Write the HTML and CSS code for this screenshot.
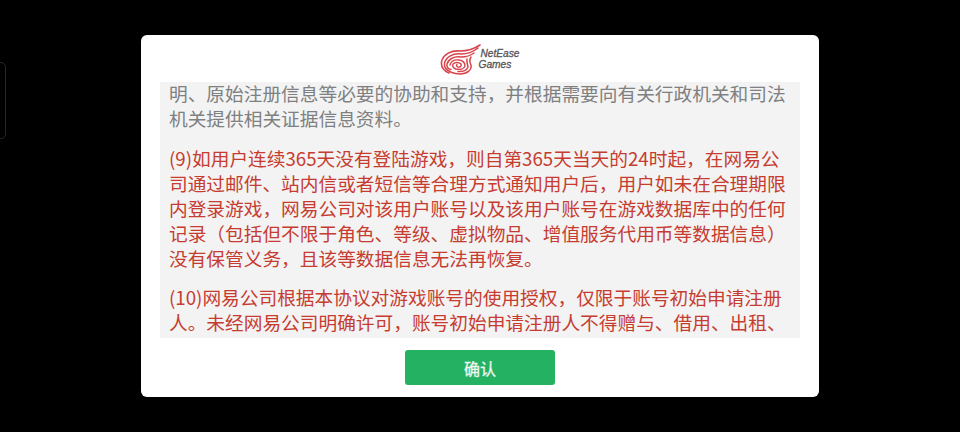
FILE: index.html
```html
<!DOCTYPE html>
<html lang="zh-CN">
<head>
<meta charset="utf-8">
<title>NetEase Games</title>
<link rel="stylesheet" href="styles.css">
</head>
<body>
<div class="edge"></div>
<main class="dialog">
  <header class="logo">
    <svg class="mark" viewBox="0 0 41 31" width="41" height="31" fill="none" stroke="#d9434b" stroke-linecap="round">
      <path d="M40 1C34 5 27 7 20 7 12 6 3 10 1.500 18 1 23 4 27 9 29" stroke-width="1.6"/>
      <path d="M38 4C33 8 27 10 21 10 13 9 6 13 4.500 19 4 23 6 26 10 27.500" stroke-width="1.5"/>
      <path d="M34 9C30 12 26 13 21 13 14 12 8.500 15 7 20 6.500 23 8 25 11 25.500" stroke-width="1.5"/>
      <path d="M31 13C29 16 30 19 31 21 32 26 27 30 20 30 16 30 13 29 10.500 28" stroke-width="1.5"/>
      <path d="M27 15C26 18 28 21 28 23 27 26 23 28 18 27.500" stroke-width="1.5"/>
      <path d="M10 21C11 17 15 15.500 19 16 23 16.500 25 19 25 22 24 25 20 26 16 25 13 24 12 22 13 20 15 18 19 18 21 20 22 22 20 23.500 18 23 16.500 22.500 16 21.500 17 20.500" stroke-width="1.4"/>
    </svg>
    <div class="brand"><span class="brand-top">NetEase</span><span>Games</span></div>
  </header>
  <section class="terms">
    <div class="flow">
      <p class="muted">明、原始注册信息等必要的协助和支持，并根据需要向有关行政机关和司法机关提供相关证据信息资料。</p>
      <p class="alert">(9)如用户连续365天没有登陆游戏，则自第365天当天的24时起，在网易公司通过邮件、站内信或者短信等合理方式通知用户后，用户如未在合理期限内登录游戏，网易公司对该用户账号以及该用户账号在游戏数据库中的任何记录（包括但不限于角色、等级、虚拟物品、增值服务代用币等数据信息）没有保管义务，且该等数据信息无法再恢复。</p>
      <p class="alert">(10)网易公司根据本协议对游戏账号的使用授权，仅限于账号初始申请注册人。未经网易公司明确许可，账号初始申请注册人不得赠与、借用、出租、</p>
    </div>
  </section>
  <footer class="actions"><button class="confirm">确认</button></footer>
</main>
</body>
</html>
```
FILE: styles.css
```css
* { box-sizing: border-box; }
html, body { margin: 0; height: 100%; }
body {
  width: 960px; height: 432px; overflow: hidden; background: #000;
  display: flex; justify-content: center; padding-top: 35px;
  font-family: "Noto Sans CJK SC", "Liberation Sans", sans-serif;
  position: relative;
}
.edge {
  position: absolute; left: -10px; top: 62px; width: 16px; height: 77px;
  border: 1px solid #24282d; border-radius: 5px;
}
.dialog {
  width: 678px; height: 362px; background: #fff; border-radius: 6px;
  display: flex; flex-direction: column; align-items: center;
}
.logo { height: 47px; display: flex; align-items: flex-start; justify-content: center; padding-top: 9px; }
.mark { display: block; }
.brand {
  display: flex; flex-direction: column; margin: 4px 0 0 -3px;
  font: italic 400 10.200px/11px "Liberation Sans", sans-serif; color: #55565a;
  -webkit-text-stroke: 0.3px #55565a;
}
.brand-top { margin-left: 2px; }
.terms { width: 640px; height: 256px; background: #f3f3f3; overflow: hidden; padding: 0 9px; }
.flow { font-size: 18.7px; line-height: 25px; margin-top: -2px; }
.flow p { margin: 0 0 14.5px; }
.muted { color: #7e8081; }
.alert { color: #c63c30; }
.actions { flex: 1; display: flex; align-items: flex-start; padding-top: 12px; }
.confirm {
  width: 150px; height: 35px; border: 0; border-radius: 3px; background: #25b162; color: #eef7f1;
  font: 400 16px "Noto Sans CJK SC", sans-serif; padding: 0;
  -webkit-text-stroke: 0.3px #eef7f1;
}
```
